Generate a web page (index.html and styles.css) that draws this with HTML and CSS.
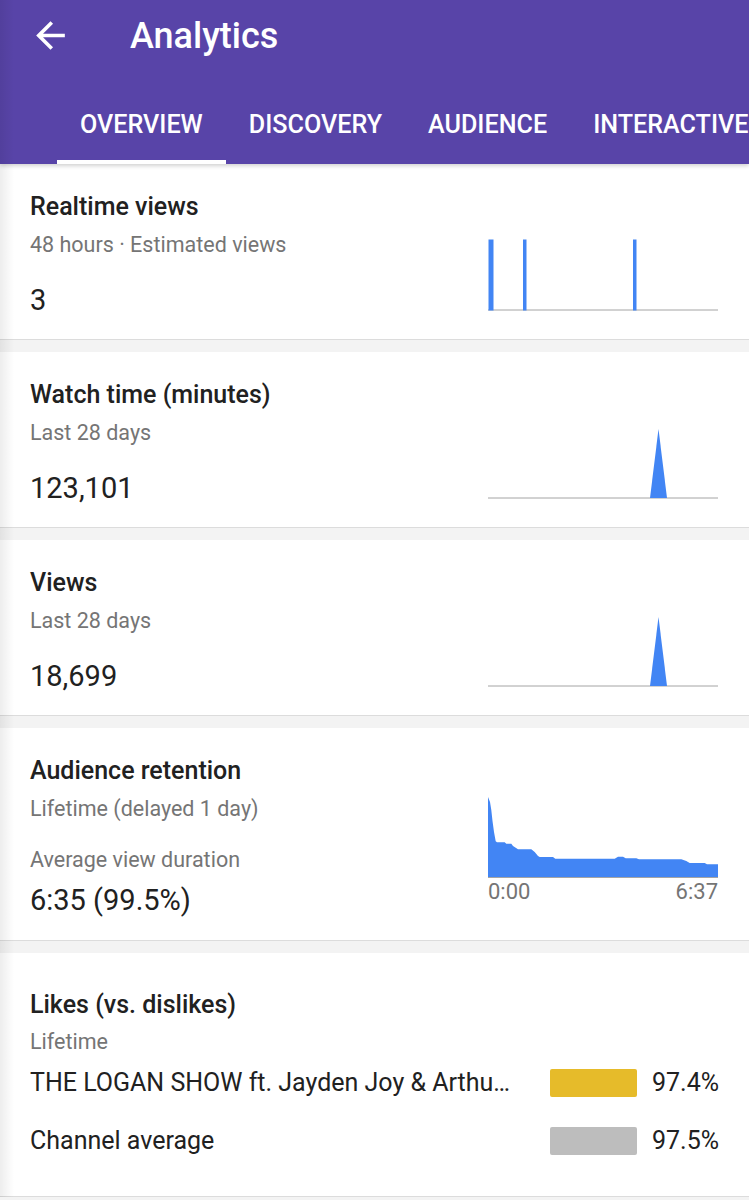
FILE: index.html
```html
<!DOCTYPE html>
<html lang="en">
<head>
    <meta charset="UTF-8">
    <meta name="viewport" content="width=device-width, initial-scale=1.0">
    <title>Analytics</title>

    <link rel="stylesheet" href="styles.css">
</head>
<body>
    <div class="app">
        <header class="appbar">
            <div class="toolbar">
                <svg class="back" viewBox="0 0 24 24" aria-label="Back">
                    <path d="M20 11H7.83l5.59-5.59L12 4l-8 8 8 8 1.41-1.41L7.83 13H20v-2z" fill="#fff"/>
                </svg>
                <h1 class="title">Analytics</h1>
            </div>
            <nav class="tabs">
                <a class="tab tab-active">OVERVIEW</a>
                <a class="tab">DISCOVERY</a>
                <a class="tab">AUDIENCE</a>
                <a class="tab">INTERACTIVE</a>
            </nav>
        </header>

        <main>
            <!-- Realtime -->
            <section class="card">
                <div class="card-text">
                    <h2 class="card-title">Realtime views</h2>
                    <p class="card-sub">48 hours · Estimated views</p>
                    <p class="card-value">3</p>
                </div>
                <svg class="spark" width="230" height="72" viewBox="0 0 230 72">
                    <line x1="0" y1="71" x2="230" y2="71" class="axis"/>
                    <rect x="0.5" y="0.5" width="5" height="71" class="fill"/>
                    <rect x="35" y="0.5" width="3.5" height="71" class="fill"/>
                    <rect x="145" y="0.5" width="3.5" height="71" class="fill"/>
                </svg>
            </section>

            <!-- Watch time -->
            <section class="card">
                <div class="card-text">
                    <h2 class="card-title">Watch time (minutes)</h2>
                    <p class="card-sub">Last 28 days</p>
                    <p class="card-value">123,101</p>
                </div>
                <svg class="spark" width="230" height="72" viewBox="0 0 230 72">
                    <line x1="0" y1="71" x2="230" y2="71" class="axis"/>
                    <polygon points="162,71 170.5,2 179,71" class="fill"/>
                </svg>
            </section>

            <!-- Views -->
            <section class="card">
                <div class="card-text">
                    <h2 class="card-title">Views</h2>
                    <p class="card-sub">Last 28 days</p>
                    <p class="card-value">18,699</p>
                </div>
                <svg class="spark" width="230" height="72" viewBox="0 0 230 72">
                    <line x1="0" y1="71" x2="230" y2="71" class="axis"/>
                    <polygon points="162,71 170.5,2 179,71" class="fill"/>
                </svg>
            </section>

            <!-- Retention -->
            <section class="card card-retention">
                <div class="card-text">
                    <h2 class="card-title">Audience retention</h2>
                    <p class="card-sub">Lifetime (delayed 1 day)</p>
                    <p class="card-sub card-label">Average view duration</p>
                    <p class="card-value card-value-tight">6:35 (99.5%)</p>
                </div>
                <div class="retention">
                    <svg width="230" height="81" viewBox="0 0 230 81">
                        <polygon class="fill" points="0,0 2,5 3.3,13 4.5,24 6,35 7.7,44.3 9,45.3 16.7,45.3 18.3,46.7 23.3,46.7 25,49 30,52.3 43.3,52.3 46.7,55 50,59 51.7,60 65,60 67.3,61.7 126.7,61.7 130,59.7 135,59.7 137.7,61.3 148.3,61.3 151,62.3 193.3,62.3 198.3,64 201.7,66 216.7,66 219,67.3 230,67.3 230,80 0,80"/>
                        <line x1="0" y1="80.5" x2="230" y2="80.5" class="axis"/>
                    </svg>
                    <div class="retention-axis">
                        <span>0:00</span>
                        <span>6:37</span>
                    </div>
                </div>
            </section>

            <!-- Likes -->
            <section class="card card-likes">
                <h2 class="card-title">Likes (vs. dislikes)</h2>
                <p class="card-sub">Lifetime</p>
                <div class="likes-list">
                    <div class="likes-row">
                        <span class="likes-name">THE LOGAN SHOW ft. Jayden Joy &amp; Arthu…</span>
                        <span class="likes-bar bar-video"></span>
                        <span class="likes-pct">97.4%</span>
                    </div>
                    <div class="likes-row">
                        <span class="likes-name">Channel average</span>
                        <span class="likes-bar bar-channel"></span>
                        <span class="likes-pct">97.5%</span>
                    </div>
                </div>
            </section>
        </main>
    </div>
</body>
</html>
```

FILE: styles.css
```css
/* Analytics overview */

body {
    margin: 0;
    background-color: #f3f3f3;
    font-family: Roboto, "Noto Sans", sans-serif;
    color: #212121;
}
.app {
    position: relative;
    width: 749px;
    overflow: hidden;
}
/* faint shade along the left edge of the screen */
.app::before {
    content: "";
    position: absolute;
    top: 0;
    bottom: 0;
    left: 0;
    width: 14px;
    background: linear-gradient(to right, rgba(0, 0, 0, 0.07), rgba(0, 0, 0, 0));
    z-index: 5;
    pointer-events: none;
}

/* app bar */
.appbar {
    position: relative;
    z-index: 2;
    background-color: #5844a8;
    color: #fff;
    box-shadow: 0 2px 4px rgba(0, 0, 0, 0.18);
}
.toolbar {
    display: flex;
    align-items: center;
    height: 71px;
}
.back {
    width: 43px;
    height: 43px;
    margin-left: 29px;
}
.title {
    margin: 0 0 0 58px;
    font-size: 36px;
    font-weight: 500;
}
.tabs {
    display: flex;
    padding-left: 57px;
    height: 93px;
    white-space: nowrap;
}
.tab {
    box-sizing: border-box;
    padding: 40px 23px 0;
    font-size: 25.15px;
    font-weight: 500;
    line-height: 28px;
    border-bottom: 4px solid transparent;
}
.tab-active {
    border-bottom-color: #fff;
}

/* cards */
.card {
    display: flex;
    justify-content: space-between;
    padding: 27px 31px 21px 30px;
    margin-bottom: 12px;
    background-color: #fff;
    border-bottom: 1px solid #dcdcdc;
}
.card-title {
    margin: 0;
    font-size: 25px;
    font-weight: 500;
    line-height: 32px;
}
.card-sub {
    margin: 8px 0 0;
    font-size: 21.5px;
    line-height: 28px;
    color: #757575;
}
.card-label {
    margin-top: 23px;
}
.card-value {
    margin: 23px 0 0;
    font-size: 29px;
    line-height: 36px;
}
.card-value-tight {
    margin-top: 8px;
}
.spark {
    margin-top: 48px;
}
.axis {
    stroke: #a4a4a4;
    stroke-width: 1;
}
.fill {
    fill: #4285f4;
}

/* retention chart */
.card-retention {
    padding-bottom: 22px;
}
.retention {
    margin-top: 42px;
    width: 230px;
}
.retention svg {
    display: block;
}
.retention-axis {
    display: flex;
    justify-content: space-between;
    font-size: 22px;
    line-height: 28px;
    color: #757575;
}

/* likes */
.card-likes {
    display: block;
    padding: 36px 30px 28px 30px;
    margin-bottom: 0;
}
.card-likes .card-sub {
    margin-top: 7px;
}
.likes-list {
    display: flex;
    flex-direction: column;
    gap: 4px;
}
.likes-row {
    display: flex;
    align-items: center;
    height: 54px;
    font-size: 25px;
    line-height: 28px;
}
.likes-name {
    flex: 1;
    white-space: nowrap;
    overflow: hidden;
}
.likes-bar {
    width: 87px;
    height: 28px;
    border-radius: 2px;
}
.bar-video {
    background-color: #e6bb2a;
}
.bar-channel {
    background-color: #bdbdbd;
}
.likes-pct {
    width: 82px;
    text-align: right;
}
```
